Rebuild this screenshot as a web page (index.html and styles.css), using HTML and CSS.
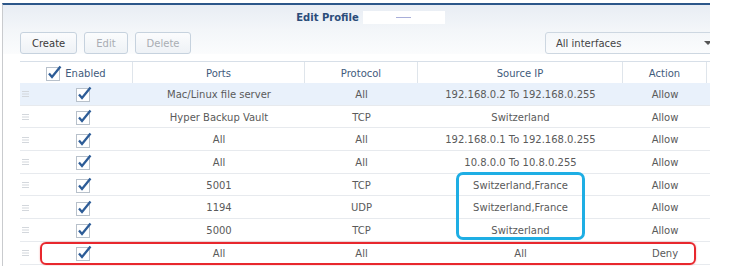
FILE: index.html
```html
<!DOCTYPE html>
<html lang="en">
<head>
    <meta charset="UTF-8">
    <title>Edit Profile</title>
    <link rel="stylesheet" href="styles.css">
</head>
<body>
    <div class="dialog">
        <div class="dialog-header">
            <div class="title-group">
                <span class="title">Edit Profile</span>
                <span class="redacted"><span class="dash"></span></span>
            </div>
        </div>

        <div class="toolbar">
            <button class="btn">Create</button>
            <button class="btn" disabled>Edit</button>
            <button class="btn" disabled>Delete</button>
            <div class="spacer"></div>
            <div class="select">All interfaces<span class="arrow"></span></div>
        </div>

        <div class="grid">
            <div class="head">
                <div class="hcell enabled">
                    <svg class="check" width="16" height="16" viewBox="0 0 16 16"><rect x="0.5" y="2.5" width="13" height="13" fill="#fff" stroke="#b8c1cb"/><path d="M3 8.6 L6 12 L14.5 1.5" fill="none" stroke="#2d5c97" stroke-width="2.3"/></svg>
                    Enabled
                </div>
                <div class="hcell">Ports</div>
                <div class="hcell">Protocol</div>
                <div class="hcell">Source IP</div>
                <div class="hcell">Action</div>
                <div class="hcell last"></div>
            </div>
            <div id="rows"></div>
        </div>
    </div>

    <div class="mark-blue"></div>
    <div class="mark-red"></div>

    <script>
        var rules = [
            ["Mac/Linux file server", "All", "192.168.0.2 To 192.168.0.255", "Allow"],
            ["Hyper Backup Vault", "TCP", "Switzerland", "Allow"],
            ["All", "All", "192.168.0.1 To 192.168.0.255", "Allow"],
            ["All", "All", "10.8.0.0 To 10.8.0.255", "Allow"],
            ["5001", "TCP", "Switzerland,France", "Allow"],
            ["1194", "UDP", "Switzerland,France", "Allow"],
            ["5000", "TCP", "Switzerland", "Allow"],
            ["All", "All", "All", "Deny"]
        ];

        var handle = '<svg width="7" height="6" viewBox="0 0 7 6"><path d="M0 0.5H7M0 3H7M0 5.5H7" stroke="#d3d7dc" stroke-width="1"/></svg>';
        var check = '<svg width="16" height="16" viewBox="0 0 16 16"><rect x="0.5" y="2.5" width="13" height="13" fill="#fff" stroke="#b8c1cb"/><path d="M3 8.6 L6 12 L14.5 1.5" fill="none" stroke="#2d5c97" stroke-width="2.3"/></svg>';

        var html = "";
        rules.forEach(function (r, i) {
            html += '<div class="row' + (i === 0 ? ' selected' : '') + '">' +
                '<div class="cell handle">' + handle + '</div>' +
                '<div class="cell">' + check + '</div>' +
                '<div class="cell">' + r[0] + '</div>' +
                '<div class="cell">' + r[1] + '</div>' +
                '<div class="cell">' + r[2] + '</div>' +
                '<div class="cell">' + r[3] + '</div>' +
                '<div class="cell"></div>' +
                '</div>';
        });
        document.getElementById("rows").innerHTML = html;
    </script>
</body>
</html>
```

FILE: styles.css
```css
body {
    margin: 0;
    background: #fff;
    font-family: "DejaVu Sans", Verdana, sans-serif;
    font-size: 10px;
    color: #5a5a5a;
    height: 266px;
    overflow: hidden;
}
.dialog {
    margin: 3px 0 0 2px;
    width: 707px;
    height: 263px;
    border-top: 2px solid #2c578a;
    border-left: 1px solid #c9cbce;
    overflow: hidden;
    background: #fff;
}
.dialog-header {
    height: 25px;
    display: flex;
    justify-content: center;
    align-items: center;
    background: linear-gradient(#e8edf4, #f3f6f9);
}
.title-group {
    display: flex;
    align-items: center;
    gap: 4px;
    margin-left: 28px;
}
.title {
    font-weight: bold;
    color: #2b4c7a;
    font-size: 10px;
}
.redacted {
    width: 82px;
    height: 13px;
    background: #fff;
    display: flex;
    align-items: center;
    justify-content: center;
}
.dash {
    width: 15px;
    height: 1px;
    background: #a8aed9;
}
.toolbar {
    display: flex;
    align-items: center;
    gap: 7px;
    padding: 2px 0 0 17px;
    height: 22px;
    background: linear-gradient(#f3f6f9, #fbfcfd);
}
.btn {
    height: 22px;
    padding: 0 11px;
    border: 1px solid #c6d2de;
    border-radius: 3px;
    background: linear-gradient(#fbfcfd, #eef2f6);
    font-family: inherit;
    font-size: 10px;
    color: #3a3a3a;
}
.btn:disabled {
    color: #a9adb3;
}
.spacer {
    flex: 1;
}
.select {
    width: 160px;
    height: 20px;
    margin-right: -7px;
    padding-left: 10px;
    border: 1px solid #cdd7e1;
    border-radius: 3px;
    display: flex;
    align-items: center;
    justify-content: space-between;
    color: #444;
    flex-shrink: 0;
}
.arrow {
    width: 0;
    height: 0;
    margin-right: 4px;
    border-left: 4px solid transparent;
    border-right: 4px solid transparent;
    border-top: 4px solid #555;
}
.grid {
    margin: 7px 0 0 17px;
}
.head {
    display: grid;
    grid-template-columns: 113px 172px 113px 205px 84px 20px;
    height: 22px;
    border-top: 1px solid #d7dfe8;
    box-sizing: border-box;
}
.hcell {
    display: flex;
    align-items: center;
    justify-content: center;
    padding-top: 1px;
    border-right: 1px solid #dfe5eb;
    color: #3f5b7c;
}
.hcell.last {
    border-right: none;
}
.hcell.enabled {
    gap: 3px;
}
.row {
    display: grid;
    grid-template-columns: 15px 98px 172px 113px 205px 84px 20px;
    height: 22.7px;
    box-sizing: border-box;
    border-bottom: 1px solid #e7eaee;
}
.row.selected {
    background: #e9f1fb;
}
.cell {
    display: flex;
    align-items: center;
    justify-content: center;
    padding-top: 1px;
    white-space: nowrap;
}
.cell.handle {
    justify-content: flex-start;
    padding-left: 2px;
}
.cell svg {
    display: block;
}
.mark-blue {
    position: absolute;
    left: 456px;
    top: 172px;
    width: 129px;
    height: 68px;
    box-sizing: border-box;
    border: 3.5px solid #1eaee4;
    border-radius: 7px;
}
.mark-red {
    position: absolute;
    left: 40px;
    top: 242px;
    width: 656px;
    height: 23px;
    box-sizing: border-box;
    border: 2px solid #e8272d;
    border-radius: 6px;
    box-shadow: 0 0 2px rgba(232, 39, 45, 0.4);
}
```
